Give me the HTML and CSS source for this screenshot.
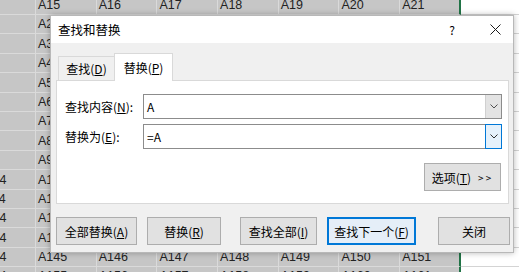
FILE: index.html
```html
<!DOCTYPE html>
<html>
	<head>
		<meta charset="UTF-8">
		<title>查找和替换</title>
		<link rel="stylesheet" href="styles.css">
	</head>
	<body>
		<div class="sheet">
			<span>A14</span><span>A15</span><span>A16</span><span>A17</span><span>A18</span><span>A19</span><span>A20</span><span>A21</span><span></span>
			<span>A24</span><span>A25</span><span>A26</span><span>A27</span><span>A28</span><span>A29</span><span>A30</span><span>A31</span><span></span>
			<span>A34</span><span>A35</span><span>A36</span><span>A37</span><span>A38</span><span>A39</span><span>A40</span><span>A41</span><span></span>
			<span>A44</span><span>A45</span><span>A46</span><span>A47</span><span>A48</span><span>A49</span><span>A50</span><span>A51</span><span></span>
			<span>A54</span><span>A55</span><span>A56</span><span>A57</span><span>A58</span><span>A59</span><span>A60</span><span>A61</span><span></span>
			<span>A64</span><span>A65</span><span>A66</span><span>A67</span><span>A68</span><span>A69</span><span>A70</span><span>A71</span><span></span>
			<span>A74</span><span>A75</span><span>A76</span><span>A77</span><span>A78</span><span>A79</span><span>A80</span><span>A81</span><span></span>
			<span>A84</span><span>A85</span><span>A86</span><span>A87</span><span>A88</span><span>A89</span><span>A90</span><span>A91</span><span></span>
			<span>A94</span><span>A95</span><span>A96</span><span>A97</span><span>A98</span><span>A99</span><span>A100</span><span>A101</span><span></span>
			<span>A104</span><span>A105</span><span>A106</span><span>A107</span><span>A108</span><span>A109</span><span>A110</span><span>A111</span><span></span>
			<span>A114</span><span>A115</span><span>A116</span><span>A117</span><span>A118</span><span>A119</span><span>A120</span><span>A121</span><span></span>
			<span>A124</span><span>A125</span><span>A126</span><span>A127</span><span>A128</span><span>A129</span><span>A130</span><span>A131</span><span></span>
			<span>A134</span><span>A135</span><span>A136</span><span>A137</span><span>A138</span><span>A139</span><span>A140</span><span>A141</span><span></span>
			<span>A144</span><span>A145</span><span>A146</span><span>A147</span><span>A148</span><span>A149</span><span>A150</span><span>A151</span><span></span>
			<span>A154</span><span>A155</span><span>A156</span><span>A157</span><span>A158</span><span>A159</span><span>A160</span><span>A161</span><span></span>
		</div>

		<div class="dialog">
			<div class="title_bar">
				<span class="title">查找和替换</span>
				<span class="help">?</span>
				<span class="close">
					<svg width="11" height="11" viewBox="0 0 11 11"><path d="M0.5 0.5L10.5 10.5M10.5 0.5L0.5 10.5" stroke="#1a1a1a" stroke-width="1"/></svg>
				</span>
			</div>
			<div class="tabs">
				<span class="tab">查找(<u>D</u>)</span>
				<span class="tab tab_on">替换(<u>P</u>)</span>
			</div>
			<div class="panel">
				<div class="field">
					<label>查找内容(<u>N</u>):</label>
					<div class="combo">
						<span class="combo_text">A</span>
						<span class="drop">
							<svg width="8" height="5" viewBox="0 0 8 5"><path d="M0.5 0.5L4 4L7.5 0.5" fill="none" stroke="#505050"/></svg>
						</span>
					</div>
				</div>
				<div class="field">
					<label>替换为(<u>E</u>):</label>
					<div class="combo">
						<span class="combo_text">=A</span>
						<span class="drop drop_hot">
							<svg width="8" height="5" viewBox="0 0 8 5"><path d="M0.5 0.5L4 4L7.5 0.5" fill="none" stroke="#303030"/></svg>
						</span>
					</div>
				</div>
				<div class="opt_row">
					<span class="btn opt">选项(<u>T</u>)<span class="more">&gt;&gt;</span></span>
				</div>
			</div>
			<div class="buttons">
				<span class="btn b_all">全部替换(<u>A</u>)</span>
				<span class="btn b_one">替换(<u>R</u>)</span>
				<span class="btn b_find_all">查找全部(<u>I</u>)</span>
				<span class="btn b_next">查找下一个(<u>F</u>)</span>
				<span class="btn b_close">关闭</span>
			</div>
		</div>
	</body>
</html>
```

FILE: styles.css
```css
*{
	padding: 0;
	margin: 0;
	box-sizing: border-box;
}
body{
	width: 519px;
	height: 272px;
	overflow: hidden;
	background: #fff;
	position: relative;
}
u{
	text-decoration: underline;
	text-underline-offset: 1px;
}

/* sheet behind the dialog */
.sheet{
	display: grid;
	grid-template-columns: repeat(8, 60.7px) 1fr;
	grid-auto-rows: 19.4px;
	width: calc(100% + 24.7px);
	height: calc(100% + 4.4px);
	overflow: hidden;
	margin-left: -24.7px;
	margin-top: -4.4px;
	font-family: "Liberation Sans", Arial, sans-serif;
	font-size: 12.5px;
	color: #222;
}
.sheet>span{
	display: flex;
	align-items: flex-end;
	padding: 0 2px 2px;
	overflow: hidden;
	white-space: nowrap;
	background: #c6c6c6;
	border-right: 1px solid #dadada;
	border-bottom: 1px solid #dadada;
}
.sheet>span:nth-child(9n+8){
	border-right: 2px solid #217346;
}
.sheet>span:nth-child(9n){
	background: #fff;
	border-right: none;
	border-bottom: 1px solid #d4d4d4;
}

/* dialog */
.dialog{
	position: absolute;
	left: 50px;
	top: 15px;
	width: 464px;
	height: 238px;
	background: #f0f0f0;
	border: 1px solid #b8b8b8;
	box-shadow: 0 0 6px rgba(0, 0, 0, 0.28);
	font-family: "Noto Sans CJK SC", "Noto Sans", sans-serif;
	font-size: 12px;
	color: #000;
	display: flex;
	flex-direction: column;
}
.title_bar{
	height: 27px;
	background: #fff;
	display: flex;
	align-items: center;
	padding-left: 7px;
}
.title{
	flex: 1;
	font-size: 12.5px;
}
.help{
	font-size: 12px;
	margin-right: 35px;
}
.close{
	display: flex;
	margin-right: 12px;
}

.tabs{
	height: 37px;
	display: flex;
	align-items: flex-end;
	padding-left: 7px;
}
.tab{
	height: 24px;
	width: 56px;
	display: flex;
	align-items: center;
	justify-content: center;
	border: 1px solid #d9d9d9;
	border-bottom: none;
	border-right: none;
}
.tab_on{
	height: 28px;
	width: 59px;
	background: #fff;
	border-right: 1px solid #d9d9d9;
	margin-bottom: -1px;
	position: relative;
	z-index: 1;
}

.panel{
	height: 124px;
	margin: 0 4px 0 5px;
	background: #fff;
	border: 1px solid #d9d9d9;
	padding: 13px 6px 0 8px;
	display: flex;
	flex-direction: column;
	gap: 5px;
}
.field{
	display: flex;
	align-items: center;
	height: 25px;
}
.field>label{
	width: 78px;
}
.combo{
	flex: 1;
	height: 25px;
	border: 1px solid #8c8c8c;
	display: flex;
	align-items: stretch;
}
.combo_text{
	flex: 1;
	padding-left: 3px;
	display: flex;
	align-items: center;
}
.drop{
	width: 16px;
	display: flex;
	align-items: center;
	justify-content: center;
	background: #e3e3e3;
	border-left: 1px solid #d0d0d0;
}
.drop_hot{
	background: #e5f1fb;
	border: 1px solid #0078d7;
	margin: -1px -1px -1px 0;
	width: 17px;
}

.opt_row{
	display: flex;
	justify-content: flex-end;
	margin-top: 9px;
	padding-right: 1px;
}

.btn{
	height: 28px;
	display: flex;
	align-items: center;
	justify-content: center;
	background: #e1e1e1;
	border: 1px solid #adadad;
	white-space: nowrap;
}
.opt{
	width: 77px;
}
.more{
	font-size: 10px;
	letter-spacing: 2px;
	margin-left: 7px;
}

.buttons{
	display: flex;
	margin-top: 13px;
	padding-left: 5px;
}
.b_all{
	width: 81px;
}
.b_one{
	width: 74px;
	margin-left: 10px;
}
.b_find_all{
	width: 77px;
	margin-left: 19px;
}
.b_next{
	width: 89px;
	margin-left: 10px;
	border: 2px solid #0078d7;
	background: #e5eef8;
}
.b_close{
	width: 72px;
	margin-left: 22px;
}
```
